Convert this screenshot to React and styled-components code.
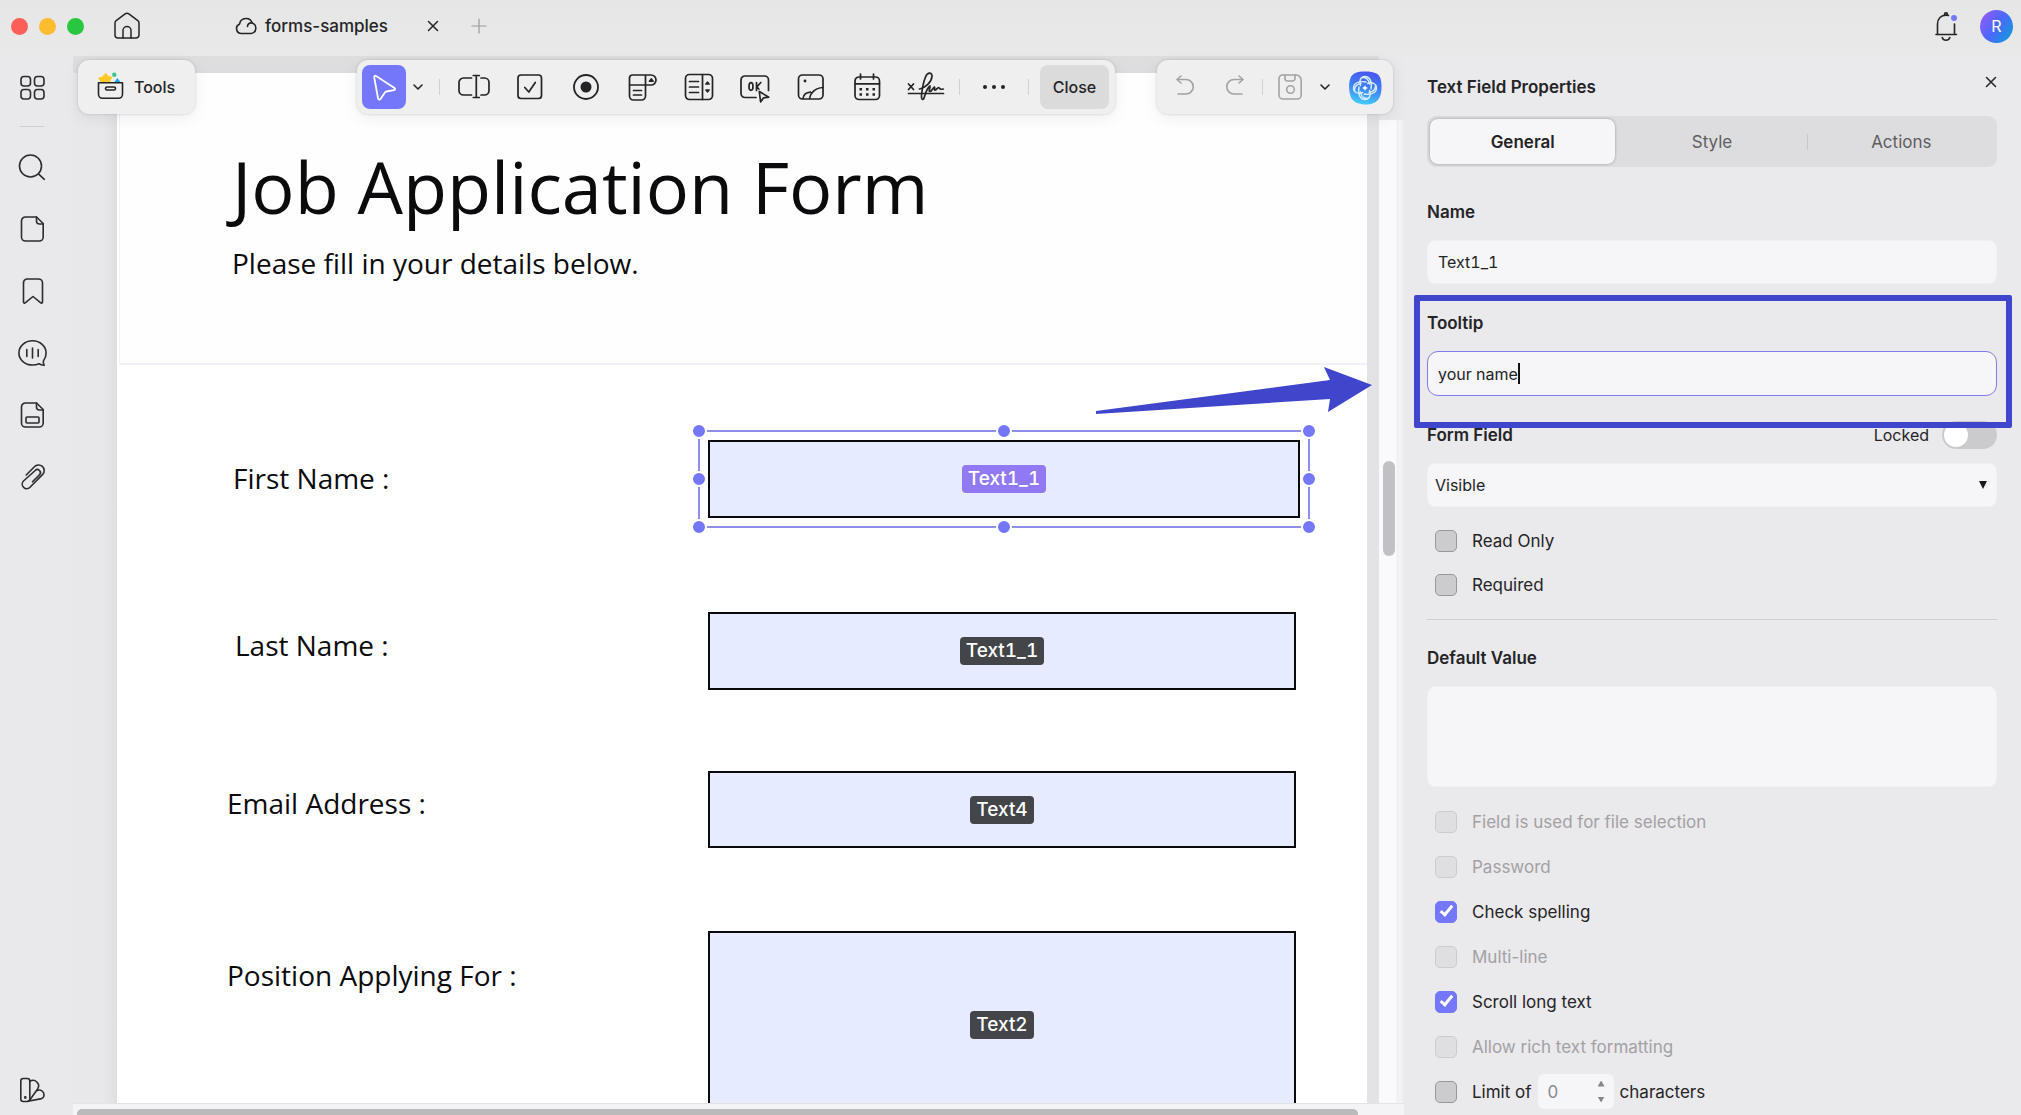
import React from "react";
import styled, { createGlobalStyle, css } from "styled-components";

const ui = `Inter, "Liberation Sans", sans-serif`;
const doc = `"Open Sans", "Noto Sans", sans-serif`;
const accent = "#7577fb";
const ink = "#242426";

const GlobalStyle = createGlobalStyle`
  *, *::before, *::after { box-sizing: border-box; }
  body { margin: 0; overflow: hidden; font-family: ${ui}; font-size: 16px; color: ${ink}; background: #e9e9eb; }
  button, input, select, textarea { font: inherit; color: inherit; margin: 0; }
  button { border: 0; padding: 0; background: none; cursor: pointer; }
  svg { display: block; flex: none; }
`;

const Shell = styled.div`
  display: flex;
  flex-direction: column;
  height: 100vh;
`;

/* ---------- title bar ---------- */

const TitleBar = styled.header`
  display: flex;
  align-items: center;
  height: 56px;
  padding: 0 8px 4px 11px;
  background: linear-gradient(#e6e6e6, #e9e9ea);
`;

const Lights = styled.div`
  display: flex;
  gap: 11px;
`;

const Light = styled.button`
  width: 17px;
  height: 17px;
  border-radius: 50%;
  background: ${(p) => p.$color};
`;

const BarButton = styled.button`
  display: grid;
  place-items: center;
  width: 32px;
  height: 32px;
  color: ${(p) => (p.$muted ? "#9a9a9c" : ink)};
`;

const HomeButton = styled(BarButton)`
  margin-left: 27px;
`;

const FileTab = styled.div`
  display: flex;
  align-items: center;
  width: 216px;
  margin: 0 14px 0 90px;
  gap: 6px;
  font-size: 17px;
  font-weight: 500;
  line-height: 32px;
  white-space: nowrap;
`;

const TabClose = styled.button`
  display: grid;
  place-items: center;
  width: 32px;
  height: 32px;
  margin-left: auto;
`;

const Account = styled.div`
  display: flex;
  align-items: center;
  gap: 18px;
  margin-left: auto;
`;

const Avatar = styled.button`
  width: 33px;
  height: 33px;
  border-radius: 50%;
  color: #fff;
  background: linear-gradient(125deg, #8f5cf7 10%, #4a68fb 50%, #0c9fd8 95%);
`;

/* ---------- body ---------- */

const Body = styled.div`
  display: flex;
  flex: 1;
  min-height: 0;
`;

const Rail = styled.nav`
  display: flex;
  flex-direction: column;
  align-items: center;
  flex: 0 0 73px;
  padding: 16px 9px 9px 0;
  gap: 30px;
  background: #e9e9eb;
`;

const RailButton = styled.button`
  width: 32px;
  height: 32px;
  color: #2c2c2e;

  &:last-child { margin-top: auto; }
`;

const RailLine = styled.hr`
  width: 24px;
  height: 1px;
  margin: -8px 0 -6px;
  border: 0;
  background: #cfcfd2;
`;

const Workspace = styled.main`
  position: relative;
  display: flex;
  flex-direction: column;
  flex: 1;
  min-width: 0;
`;

const Viewport = styled.div`
  display: flex;
  flex: 1;
  min-height: 0;
`;

const Desk = styled.div`
  flex: 1;
  min-width: 0;
  padding: 17px 12px 0 44px;
  background:
    linear-gradient(#dededf, #dcdcde) top / 100% 17px no-repeat,
    linear-gradient(90deg, #e8e8ea 0 30px, #dfdfe1 44px, #e3e2e4 45px);
`;

const Page = styled.article`
  height: 100%;
  overflow: hidden;
  background: #fff;
  font-family: ${doc};
  color: #0b0b0d;
`;

const PageHead = styled.header`
  height: 292px;
  margin-left: 2px;
  padding: 61px 0 0 112px;
  background: #fefeff;
  border: solid #f1f1f8;
  border-width: 0 0 2px 1px;
`;

const PageTitle = styled.h1`
  margin: 0 0 3px;
  font-size: 72px;
  font-weight: 400;
  line-height: 104px;
  white-space: nowrap;
`;

const PageLead = styled.p`
  margin: 0;
  font-size: 28px;
  line-height: 44px;
`;

const FormRow = styled.div`
  display: flex;
  align-items: flex-start;
  margin-top: ${(p) => p.$before}px;
  padding: 0 ${(p) => (p.$wide ? 67 : 71)}px 0 110px;
`;

const RowLabel = styled.label`
  flex: 0 0 481px;
  padding: ${(p) => p.$top}px 0 0 ${(p) => p.$indent}px;
  font-size: 28px;
  line-height: 40px;
`;

const FieldBox = styled.div`
  position: relative;
  display: grid;
  place-items: center;
  flex: 1;
  height: ${(p) => p.$height}px;
  border: 2px solid #0a0a0c;
  background: #e6ebff;
`;

const FieldTag = styled.button`
  padding: 0 6px;
  border-radius: 4px;
  font-family: ${ui};
  font-size: 19px;
  font-weight: 500;
  font-variant-numeric: tabular-nums;
  line-height: 28px;
  color: #fff;
  background: ${(p) => (p.$active ? "#9079f2" : "#434549")};
`;

const Selection = styled.div`
  position: absolute;
  inset: -11px;
  outline: 2px solid #8f8fe8;
  outline-offset: -1px;
  pointer-events: none;
`;

const Handle = styled.i`
  position: absolute;
  left: ${(p) => p.$x}%;
  top: ${(p) => p.$y}%;
  width: 16px;
  height: 16px;
  border: 2px solid #fff;
  border-radius: 50%;
  background: ${accent};
  transform: translate(-50%, -50%);
`;

const VScroll = styled.div`
  width: 25px;
  margin-top: 64px;
  padding: 341px 9px 0 4px;
  background: linear-gradient(90deg, #fafafc 0 17px, #efeff1 18px, #f4f4f6 21px, #ebebed 25px);
`;

const VThumb = styled.div`
  height: 95px;
  border-radius: 6px;
  background: #c1c0c4;
`;

const HScroll = styled.div`
  height: 12px;
  padding: 5px 46px 0 4px;
  background: #f4f4f6;
  border-top: 1px solid #e4e4e6;
  overflow: hidden;
`;

const HThumb = styled.div`
  height: 12px;
  border-radius: 5px;
  background: #bababb;
`;

/* ---------- floating toolbars ---------- */

const ToolLayer = styled.div`
  position: absolute;
  top: 4px;
  left: 5px;
  right: 11px;
  display: flex;
  gap: 42px;
`;

const Bar = styled.div`
  display: flex;
  align-items: center;
  height: 54px;
  border-radius: 11px;
  background: #efefef;
  box-shadow: 0 0 3px rgba(0, 0, 0, 0.16), 0 4px 16px rgba(0, 0, 0, 0.07);
`;

const ToolsBar = styled(Bar)`
  width: 117px;
  margin-right: auto;
`;

const ToolsButton = styled.button`
  display: flex;
  align-items: center;
  gap: 8px;
  padding-left: 16px;
  font-weight: 500;
`;

const FormBar = styled(Bar)`
  width: 758px;
  padding: 0 6px 0 5px;
`;

const PointerButton = styled.button`
  display: grid;
  place-items: center;
  width: 44px;
  height: 44px;
  border-radius: 8px;
  color: #fff;
  background: ${accent};
`;

const Chevron = styled.button`
  display: grid;
  place-items: center;
  width: 24px;
  height: 32px;
`;

const Sep = styled.span`
  width: 1px;
  height: 16px;
  background: #d2d2d4;

  ${Chevron} + & { margin-left: 9px; }
`;

const FieldTools = styled.div`
  display: flex;
  justify-content: space-between;
  flex: 1;
  padding: 0 14px 0 18px;
`;

const ToolButton = styled.button`
  display: grid;
  place-items: center;
  width: ${(p) => p.$w || 32}px;
  height: 32px;
  color: ${(p) => (p.$muted ? "#a3a3a6" : ink)};
`;

const MoreButton = styled(ToolButton)`
  margin: 0 18px;
`;

const CloseButton = styled.button`
  width: 69px;
  height: 44px;
  margin-left: 11px;
  border-radius: 8px;
  font-weight: 500;
  background: #dbdbdc;
`;

const HistoryBar = styled(Bar)`
  justify-content: space-between;
  width: 236px;
  padding: 0 11px 0 12px;
`;

const ButtonPair = styled.div`
  display: flex;
  gap: ${(p) => p.$gap}px;
`;

const Arrow = styled.svg`
  position: absolute;
  right: 30px;
  top: 308px;
`;

/* ---------- property panel ---------- */

const Panel = styled.aside`
  flex: 0 0 617px;
  padding: 15px 24px 0 23px;
  background: #eae9eb;
  font-size: 17px;
`;

const PanelHead = styled.div`
  display: flex;
  align-items: flex-start;
  justify-content: space-between;
  height: 45px;
`;

const PanelTitle = styled.h2`
  margin: 0;
  font-size: 17px;
  font-weight: 600;
  line-height: 32px;
`;

const PanelClose = styled.button`
  display: grid;
  place-items: center;
  width: 12px;
  height: 22px;
`;

const Tabs = styled.div`
  display: grid;
  grid-template-columns: repeat(3, 1fr);
  gap: 4px;
  height: 51px;
  margin-bottom: 33px;
  padding: 3px;
  border-radius: 9px;
  background: #dddddf;
`;

const Tab = styled.button`
  position: relative;
  border-radius: 8px;
  color: #5d5d60;

  &:last-child::before {
    content: "";
    position: absolute;
    left: -2px;
    top: 15px;
    width: 1px;
    height: 16px;
    background: #c8c8ca;
  }

  ${(p) =>
    p.$active &&
    css`
      color: ${ink};
      font-weight: 600;
      background: #f6f6f8;
      box-shadow: 0 0 3px rgba(0, 0, 0, 0.32);
    `}
`;

const Group = styled.div`
  position: relative;
  display: flex;
  flex-direction: column;
  gap: 16px;
  margin-bottom: 27px;
`;

const GroupHead = styled.div`
  display: flex;
  align-items: center;
  justify-content: space-between;
  height: 24px;
`;

const GroupLabel = styled.label`
  font-weight: 600;
  line-height: 24px;
`;

const boxed = css`
  border: 1px solid ${(p) => (p.$focused ? "#7f7be8" : "#f0f0f2")};
  border-radius: ${(p) => (p.$focused ? 11 : 8)}px;
  background: #f6f6f8;
  font-size: 16px;
  font-variant-numeric: tabular-nums;
  outline: 0;
`;

const TextInput = styled.input`
  ${boxed}
  width: 100%;
  height: 44px;
  padding: 0 10px;
`;

const FocusedBox = styled.div`
  ${boxed}
  display: flex;
  align-items: center;
  height: 45px;
  padding: 0 10px;
`;

const BareInput = styled.input`
  field-sizing: content;
  padding: 0;
  border: 0;
  outline: 0;
  background: none;
`;

const Caret = styled.span`
  width: 2px;
  height: 21px;
  background: #111;
`;

const Marker = styled.div`
  position: absolute;
  inset: -16px -15px -32px -13px;
  border: 6px solid #3f46cb;
  border-radius: 2px;
  pointer-events: none;
`;

const SelectWrap = styled.div`
  position: relative;
`;

const Select = styled.select`
  ${boxed}
  appearance: none;
  width: 100%;
  height: 44px;
  padding: 0 7px;
`;

const SelectArrow = styled.span`
  position: absolute;
  right: 10px;
  top: 18px;
  width: 8px;
  height: 8px;
  background: #19191b;
  clip-path: polygon(0 0, 100% 0, 50% 100%);
  pointer-events: none;
`;

const SwitchLabel = styled.label`
  display: flex;
  align-items: center;
  gap: 13px;
  font-size: 16px;
`;

const Switch = styled.input`
  appearance: none;
  width: 55px;
  height: 28px;
  padding: 2px;
  border-radius: 14px;
  background: #cbcbcd;

  &::before {
    content: "";
    display: block;
    width: 24px;
    height: 24px;
    border-radius: 50%;
    background: #fff;
  }
`;

const Checks = styled.div`
  padding: 0 8px;
`;

const CheckRow = styled.div`
  display: flex;
  align-items: center;
  gap: 15px;
  height: ${(p) => (p.$tight ? 44 : 45)}px;
  color: ${(p) => (p.$off ? "#a2a1a4" : ink)};
`;

const CheckBox = styled.input`
  appearance: none;
  display: grid;
  justify-content: center;
  width: 22px;
  height: 22px;
  flex: none;
  border: 1px solid #98979a;
  border-radius: 5px;
  background: #cccbce;

  &:disabled {
    border-color: #cccbcd;
    background: #dfdee0;
  }

  &:checked {
    border-color: ${accent};
    background: ${accent};
  }

  &:checked::after {
    content: "";
    width: 7px;
    height: 13px;
    margin-top: 1px;
    border: solid #fff;
    border-width: 0 3px 3px 0;
    transform: rotate(40deg);
  }
`;

const Limit = styled.div`
  display: flex;
  align-items: center;
  gap: 6px;
`;

const Stepper = styled.div`
  display: flex;
  align-items: center;
  width: 76px;
  height: 35px;
  padding: 0 9px 0 10px;
  border-radius: 6px;
  background: #f6f5f8;
`;

const StepInput = styled.input`
  appearance: textfield;
  flex: 1;
  min-width: 0;
  padding: 0;
  border: 0;
  outline: 0;
  background: none;
  color: #8b8b8e;

  &::-webkit-inner-spin-button { display: none; }
`;

const StepButtons = styled.div`
  display: grid;
  gap: 10px;
`;

const StepButton = styled.button`
  width: 7px;
  height: 6px;
  background: #858588;
  clip-path: ${(p) => (p.$up ? "polygon(50% 0, 100% 100%, 0 100%)" : "polygon(0 0, 100% 0, 50% 100%)")};
`;

const Rule = styled.hr`
  height: 1px;
  margin: 12px 0 26px;
  border: 0;
  background: #d0cfd2;
`;

const TextArea = styled.textarea`
  ${boxed}
  display: block;
  width: 100%;
  height: 101px;
  resize: none;
`;

const Spacer = styled.div`
  margin-top: ${(p) => p.$pull}px;
`;

/* ---------- icons ---------- */

const Svg = ({ s = 32, w, sw = 1.6, children }) => (
  <svg width={w || s} height={s} viewBox={`0 0 ${w || s} ${s}`} fill="none" stroke="currentColor"
    strokeWidth={sw} strokeLinecap="round" strokeLinejoin="round" aria-hidden="true">
    {children}
  </svg>
);

const Icons = {
  home: <Svg sw={1.5}><path d="M4 13.2c0-1 .4-1.9 1.200-2.500l8.600-6.600c1.300-1 3.100-1 4.400 0l8.600 6.600c.8.6 1.200 1.500 1.200 2.500V25a3 3 0 0 1-3 3H7a3 3 0 0 1-3-3Z" /><path d="M12 28v-7.500a4 4 0 0 1 8 0V28" /></Svg>,
  cloud: <Svg s={26} sw={1.600}><path d="M8.500 20.500a5 5 0 0 1-1.900-9.600 6.500 6.500 0 0 1 12.600-.8 5.400 5.400 0 0 1-.8 10.400Z" /><path d="M14.500 13.400a3.500 3.500 0 0 1 4.700-3.300" /></Svg>,
  x: <Svg s={12} sw={1.500}><path d="M1.500 1.500l9 9M10.500 1.500l-9 9" /></Svg>,
  plus: <Svg s={16} sw={1.200}><path d="M8 1v14M1 8h14" /></Svg>,
  bell: <Svg><path d="M18.500 5.500a8 8 0 0 0-2.500-.4c-4.800 0-8.500 3.600-8.500 8.900V24.500M24.500 14v10.500M6 24.500h20.500M14.500 4.500c0-2.200 3-2.200 3 0M12.200 27.500a4 4 0 0 0 7.600 0" /><circle cx="24" cy="8" r="3" fill={accent} stroke="none" /></Svg>,
  grid: <Svg><rect x="5" y="4.500" width="9.500" height="9.500" rx="3" /><rect x="18.500" y="4.500" width="9.500" height="9.500" rx="3" /><rect x="5" y="17.500" width="9.500" height="9.500" rx="3" /><rect x="18.500" y="17.500" width="9.500" height="9.500" rx="3" /></Svg>,
  search: <Svg><circle cx="14.500" cy="15" r="11" /><path d="M22.500 22.800l5.800 5.500" /></Svg>,
  page: <Svg><path d="M9.500 4h11l6.700 6.500V24a4 4 0 0 1-4 4H9.500a4 4 0 0 1-4-4V8a4 4 0 0 1 4-4Z" /><path d="M20.500 4v4a3 3 0 0 0 3 3h3.500" /></Svg>,
  mark: <Svg><path d="M10.500 4h12a4 4 0 0 1 4 4v19a1 1 0 0 1-1.700.8L17 21.500l-7.800 6.300a1 1 0 0 1-1.700-.8V8a4 4 0 0 1 3-4Z" /></Svg>,
  talk: <Svg><path d="M16.500 3.800C9 3.800 2.900 9.200 2.900 16S9 28 16.500 28c2.500 0 4.500-.4 6.500-1.300 1.500 1.200 3.300 1.700 5.200 1.600-.9-1.400-1.200-2.700-.7-4.600 1.700-2.100 2.600-4.600 2.600-7.700 0-6.800-6.100-12.200-13.600-12.200Z" /><path d="M10.800 12.500v7M16.500 11v10M22.200 12.500v7" /></Svg>,
  pageForm: <Svg><path d="M9.500 4h11l6.700 6.500V24a4 4 0 0 1-4 4H9.500a4 4 0 0 1-4-4V8a4 4 0 0 1 4-4Z" /><path d="M20.500 4v4a3 3 0 0 0 3 3h3.500" /><rect x="10" y="18" width="13" height="6" rx="1" /></Svg>,
  clip: <Svg><path d="M10.200 14l8.200-8.200a5.600 5.600 0 0 1 8.300 7.600L14 26.300a4.500 4.500 0 0 1-6.500-6.300L19.200 9.500a3 3 0 0 1 4.300 4.200L16.500 20.800" /></Svg>,
  swatch: <Svg><rect x="4.800" y="4.500" width="9" height="23" rx="2.500" /><path d="M13.800 7.500a5.500 5.500 0 0 1 7.800 7.500L13.800 26M20 17.200c3.500-2.200 6.500-1 7.600 1.800.9 2.600.2 4.900-2 5.600L12 27.300" /><circle cx="9.300" cy="23.500" r=".6" /></Svg>,
  tools: <Svg>
    <path d="M12 1.800l2.400 3.200 4 1-2 3.500.3 2.500H6l.5-1.500L4 7l4.300-1.500Z" fill="#fcc824" stroke="none" />
    <circle cx="20.300" cy="3.800" r="2.200" fill="#37c98b" stroke="none" />
    <path d="M20 11.500l3.300-4.500 3.500 4.500Z" fill="#1aa3f0" stroke="none" />
    <path d="M4.500 11.800h24v11.500a4 4 0 0 1-4 4h-16a4 4 0 0 1-4-4Z" /><rect x="11.500" y="16" width="10" height="3" rx="1.500" /></Svg>,
  pointer: <Svg sw={1.800}><path d="M6.200 6.300c-.3-1.200.9-2 1.900-1.300L26.500 17c1 .7.7 2-.4 2.200l-7.800 1.300c-.5.100-.9.400-1.200.8l-4.600 6.600c-.7 1-2.100.8-2.400-.4Z" /></Svg>,
  chev: <Svg s={12}><path d="M2 4l4 4 4-4" /></Svg>,
  text: <Svg sw={1.700}><path d="M13.500 7H5.500a4.500 4.500 0 0 0-4.500 4.500v8A4.500 4.500 0 0 0 5.500 24h8M23 7h3.500a4.500 4.500 0 0 1 4.500 4.500v8a4.500 4.500 0 0 1-4.500 4.500H23M18.300 4.500v22M15.300 4.500h6M15.300 26.500h6" /></Svg>,
  check: <Svg sw={1.700}><rect x="4" y="4" width="23.500" height="23.500" rx="3" /><path d="M10.800 16.500l4 4.500 6.500-9.500" /></Svg>,
  radio: <Svg sw={1.800}><circle cx="16" cy="16" r="12" /><circle cx="16" cy="16" r="5.500" fill="currentColor" stroke="none" /></Svg>,
  drop: <Svg sw={1.700}><path d="M6 4h19a5 5 0 0 1 0 10H3.500V7A3 3 0 0 1 6 4ZM3.500 14v11a4 4 0 0 0 4 4h8a4 4 0 0 0 4-4V4M7.500 19.500h8M7.500 24h8" /><path d="M23.500 10.200l1.800-2.200 1.800 2.200Z" fill="currentColor" /></Svg>,
  list: <Svg sw={1.700}><rect x="2.500" y="3.500" width="27" height="25" rx="4" /><path d="M19.500 3.500v25M6.500 10.500h9M6.500 16h9M6.500 21.500h9" /><path d="M23 13l1.500-1.800L26 13ZM23 19l1.500 1.800L26 19Z" fill="currentColor" /></Svg>,
  ok: <Svg sw={1.700}><path d="M17 26.500H6a4 4 0 0 1-4-4V9a4 4 0 0 1 4-4h19.500a4 4 0 0 1 4 4v10.500" /><ellipse cx="12" cy="15.500" rx="2" ry="3.800" /><path d="M17.500 11.500v8M21.800 11.500l-4 4.300 2 2.200" /><path d="M20.300 20.500l1.300 10.500 3-4.200 5.200-.6Z" /></Svg>,
  image: <Svg sw={1.700}><rect x="3.500" y="4" width="24.500" height="24" rx="4" /><circle cx="10" cy="10" r="1.400" fill="currentColor" stroke="none" /><path d="M8 27.500c.5-4 3-6 7.500-6.300M14.500 27.500c.5-5 5-10.500 13.500-11" /></Svg>,
  calendar: <Svg sw={1.700}><rect x="4" y="6" width="24.500" height="22.500" rx="4" /><path d="M4 12.800h24.500M9.500 3v5M22.500 3v5" /><path d="M8.500 18.200h2.500M15 18.200h2.500M21.500 18.200h2.500M8.500 23.500h2.500M15 23.500h2.500M21.500 23.500h2.500" strokeWidth="2.600" strokeLinecap="butt" /></Svg>,
  sign: <Svg w={38} sw={1.700}><path d="M1.500 13l5 5.500M6.500 13l-5 5.500M1.500 22.500h35" /><path d="M12.500 18c6-1 12-7 12.500-12.500.2-4.500-4.500-4.500-6.500.5-2 5-3.500 13-4 18.500-.2 5 2 5 3 1 1-3.500 2.500-8.500 5.500-10.500.5 2-2 5.500 0 5.500s3-4 4.500-4.500c.5 1.500-.5 3.500.8 3s2-2.500 3.500-2.500c1 1 .5 2.500 4.500 1.500" /></Svg>,
  more: <Svg><g fill="currentColor" stroke="none"><circle cx="7" cy="16" r="2" /><circle cx="16" cy="16" r="2" /><circle cx="25" cy="16" r="2" /></g></Svg>,
  undo: <Svg><path d="M8.500 8.500h8.500a7.200 7.200 0 0 1 0 14.500H9" /><path d="M12 5L8 8.500l4 3.500" /></Svg>,
  redo: <Svg><path d="M23.500 8.500H15a7.200 7.200 0 0 0 0 14.500h8" /><path d="M20 5L24 8.500l-4 3.500" /></Svg>,
  save: <Svg><path d="M8.500 4h13.500c3 0 5.200 2.500 5.200 5.500V24a4 4 0 0 1-4 4H9a4 4 0 0 1-4-4V7.500A3.500 3.500 0 0 1 8.500 4Z" /><path d="M11 4v3.500a2.500 2.500 0 0 0 2.500 2.500h5A2.500 2.500 0 0 0 21 7.500V4" /><circle cx="16.500" cy="18.500" r="3.800" /></Svg>,
};

const AiIcon = () => (
  <svg width="34" height="34" viewBox="0 0 34 34" aria-hidden="true">
    <defs>
      <linearGradient id="ai" x1="0.600" y1="0" x2="0.400" y2="1">
        <stop offset="0" stopColor="#4a55f0" /><stop offset="0.500" stopColor="#3f83f5" /><stop offset="1" stopColor="#43cdf8" />
      </linearGradient>
    </defs>
    <path d="M17 .5c10 0 13.500 2 15.500 7 1.500 6 1.500 14-1 19-3 5.500-8 7-14 7S5.500 31.500 3 26.500C.5 20 .5 12 2.500 7 4.500 2 9 .5 17 .5Z" fill="url(#ai)" />
    <g fill="none" stroke="#d8eefe" strokeWidth="1.400" strokeLinecap="round">
      {[0, 90, 180, 270].map((a) => (
        <path key={a} transform={`rotate(${a} 17 17)`} d="M12.500 14.500c-2-5 .5-9 4.500-9 4.500 0 7.500 5 6 12.500M14.800 6.500c3.500 0 6 2.500 6.700 6.500" />
      ))}
    </g>
    <path d="M17 14l.9 2.100 2.100.9-2.100.9L17 20l-.9-2.100L14 17l2.100-.9Z" fill="#fff" />
  </svg>
);

const rail = [
  ["Search", "search"], ["Pages", "page"], ["Bookmarks", "mark"],
  ["Comments", "talk"], ["Fields", "pageForm"], ["Attachments", "clip"],
];

const fieldTools = [
  ["Text field", "text"], ["Check box", "check"], ["Radio button", "radio"], ["Drop-down", "drop"],
  ["List box", "list"], ["Push button", "ok"], ["Image field", "image"], ["Date field", "calendar"],
];

const rows = [
  { id: "first", label: "First Name :", tag: "Text1_1", before: 75, height: 78, top: 18, indent: 6, active: true },
  { id: "last", label: "Last Name :", tag: "Text1_1", before: 94, height: 78, top: 13, indent: 8 },
  { id: "email", label: "Email Address :", tag: "Text4", before: 81, height: 77, top: 12, indent: 0 },
  { id: "position", label: "Position Applying For :", tag: "Text2", before: 83, height: 188, top: 24, indent: 0 },
];

const handles = [[0, 0], [50, 0], [100, 0], [0, 50], [100, 50], [0, 100], [50, 100], [100, 100]];

const checks = [
  { id: "file", label: "Field is used for file selection", disabled: true },
  { id: "password", label: "Password", disabled: true },
  { id: "spelling", label: "Check spelling", checked: true },
  { id: "multiline", label: "Multi-line", disabled: true },
  { id: "scroll", label: "Scroll long text", checked: true },
  { id: "rich", label: "Allow rich text formatting", disabled: true },
];

const Check = ({ id, label, disabled, checked, tight }) => (
  <CheckRow $off={disabled} $tight={tight}>
    <CheckBox type="checkbox" id={id} disabled={disabled} defaultChecked={checked} />
    <label htmlFor={id}>{label}</label>
  </CheckRow>
);

export default function App() {
  return (
    <Shell>
      <GlobalStyle />
      <TitleBar>
        <Lights>
          <Light $color="#fc5f58" aria-label="Close window" />
          <Light $color="#fbbc2f" aria-label="Minimise" />
          <Light $color="#28c73f" aria-label="Zoom" />
        </Lights>
        <HomeButton aria-label="Home">{Icons.home}</HomeButton>
        <FileTab>
          {Icons.cloud}
          forms-samples
          <TabClose aria-label="Close tab">{Icons.x}</TabClose>
        </FileTab>
        <BarButton $muted aria-label="New tab">{Icons.plus}</BarButton>
        <Account>
          <BarButton aria-label="Notifications">{Icons.bell}</BarButton>
          <Avatar>R</Avatar>
        </Account>
      </TitleBar>

      <Body>
        <Rail>
          <RailButton aria-label="Tools grid">{Icons.grid}</RailButton>
          <RailLine />
          {rail.map(([name, icon]) => (
            <RailButton key={name} aria-label={name}>{Icons[icon]}</RailButton>
          ))}
          <RailButton aria-label="Theme">{Icons.swatch}</RailButton>
        </Rail>

        <Workspace>
          <Viewport>
            <Desk>
              <Page>
                <PageHead>
                  <PageTitle>Job Application Form</PageTitle>
                  <PageLead>Please fill in your details below.</PageLead>
                </PageHead>
                {rows.map((r) => (
                  <FormRow key={r.id} $before={r.before} $wide={r.active}>
                    <RowLabel htmlFor={r.id} $top={r.top} $indent={r.indent}>{r.label}</RowLabel>
                    <FieldBox $height={r.height}>
                      <FieldTag id={r.id} $active={r.active}>{r.tag}</FieldTag>
                      {r.active && (
                        <Selection>
                          {handles.map(([x, y]) => <Handle key={`${x}-${y}`} $x={x} $y={y} />)}
                        </Selection>
                      )}
                    </FieldBox>
                  </FormRow>
                ))}
              </Page>
            </Desk>
            <VScroll><VThumb /></VScroll>
          </Viewport>
          <HScroll><HThumb /></HScroll>

          <ToolLayer>
            <ToolsBar><ToolsButton>{Icons.tools}Tools</ToolsButton></ToolsBar>
            <FormBar>
              <PointerButton aria-label="Select">{Icons.pointer}</PointerButton>
              <Chevron aria-label="Select options">{Icons.chev}</Chevron>
              <Sep />
              <FieldTools>
                {fieldTools.map(([name, icon]) => (
                  <ToolButton key={name} aria-label={name}>{Icons[icon]}</ToolButton>
                ))}
                <ToolButton $w={38} aria-label="Signature field">{Icons.sign}</ToolButton>
              </FieldTools>
              <Sep />
              <MoreButton aria-label="More">{Icons.more}</MoreButton>
              <Sep />
              <CloseButton>Close</CloseButton>
            </FormBar>
            <HistoryBar>
              <ButtonPair $gap={18}>
                <ToolButton $muted aria-label="Undo">{Icons.undo}</ToolButton>
                <ToolButton $muted aria-label="Redo">{Icons.redo}</ToolButton>
              </ButtonPair>
              <Sep />
              <ButtonPair $gap={7}>
                <ToolButton $muted aria-label="Save">{Icons.save}</ToolButton>
                <Chevron aria-label="Save options">{Icons.chev}</Chevron>
              </ButtonPair>
              <ToolButton $w={34} aria-label="AI assistant"><AiIcon /></ToolButton>
            </HistoryBar>
          </ToolLayer>

          <Arrow width="280" height="52" viewBox="0 0 280 52" aria-hidden="true">
            <path d="M2 47L236 16 230 3 278 21 234 48 236 35 2 50Z" fill="#3f46cb" />
          </Arrow>
        </Workspace>

        <Panel>
          <PanelHead>
            <PanelTitle>Text Field Properties</PanelTitle>
            <PanelClose aria-label="Close panel">{Icons.x}</PanelClose>
          </PanelHead>
          <Tabs>
            <Tab $active>General</Tab>
            <Tab>Style</Tab>
            <Tab>Actions</Tab>
          </Tabs>

          <Group>
            <GroupLabel htmlFor="name">Name</GroupLabel>
            <TextInput id="name" defaultValue="Text1_1" />
          </Group>

          <Group>
            <GroupLabel htmlFor="tooltip">Tooltip</GroupLabel>
            <FocusedBox $focused>
              <BareInput id="tooltip" defaultValue="your name" />
              <Caret />
            </FocusedBox>
            <Marker />
          </Group>

          <GroupHead>
            <GroupLabel htmlFor="visibility">Form Field</GroupLabel>
            <SwitchLabel>Locked<Switch type="checkbox" role="switch" /></SwitchLabel>
          </GroupHead>
          <Spacer $pull={16}>
            <SelectWrap>
              <Select id="visibility" defaultValue="Visible"><option>Visible</option></Select>
              <SelectArrow />
            </SelectWrap>
          </Spacer>
          <Spacer $pull={12}>
            <Checks>
              <Check id="readonly" label="Read Only" tight />
              <Check id="required" label="Required" tight />
            </Checks>
          </Spacer>
          <Rule />
          <GroupLabel htmlFor="default">Default Value</GroupLabel>
          <Spacer $pull={16}><TextArea id="default" /></Spacer>
          <Spacer $pull={12}>
            <Checks>
              {checks.map((c) => <Check key={c.id} {...c} />)}
              <CheckRow>
                <CheckBox type="checkbox" id="limit" />
                <Limit>
                  <label htmlFor="limit">Limit of</label>
                  <Stepper>
                    <StepInput type="number" defaultValue="0" aria-label="Character limit" />
                    <StepButtons>
                      <StepButton $up aria-label="Increase" />
                      <StepButton aria-label="Decrease" />
                    </StepButtons>
                  </Stepper>
                  <label htmlFor="limit">characters</label>
                </Limit>
              </CheckRow>
            </Checks>
          </Spacer>
        </Panel>
      </Body>
    </Shell>
  );
}
